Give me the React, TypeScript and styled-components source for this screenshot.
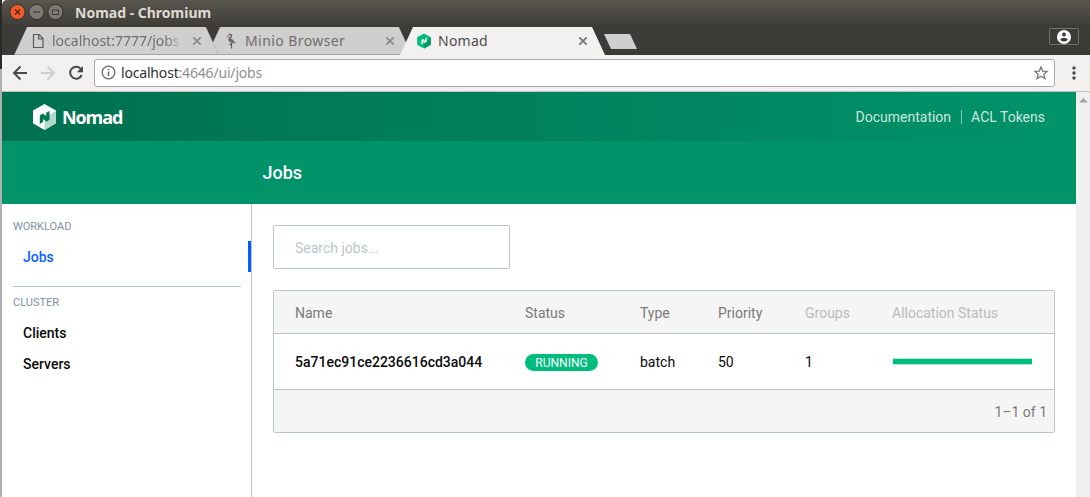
import React from "react";
import styled, { createGlobalStyle } from "styled-components";

const Global = createGlobalStyle`
  * { box-sizing: border-box; }
  body { margin: 0; background: #fff; overflow: hidden; }
`;

const uiFont = `"Noto Sans", "Open Sans", sans-serif`;
const pageFont = `Roboto, sans-serif`;

const Desktop = styled.div`
  display: flex;
  width: 1090px;
  height: 497px;
  overflow: hidden;
`;
const DesktopEdge = styled.div`
  flex: none;
  width: 2px;
  background: linear-gradient(#2b2a28 0 69px, #b0b0b0 69px);
`;
const Window = styled.div`
  flex: 1;
  min-width: 0;
  display: flex;
  flex-direction: column;
  background: #fff;
`;
const Frame = styled.div`
  height: 55px;
  flex: none;
  background: linear-gradient(#59564e 0, #3d3b37 27px, #3d3b37 100%);
  border-top-left-radius: 5px;
  font-family: ${uiFont};
`;
const TitleBar = styled.div`
  height: 27px;
  display: flex;
  align-items: center;
  padding-left: 7px;
`;
const WindowButtons = styled.svg`
  display: block;
  width: 58px;
  height: 20px;
  margin-top: -3px;
`;
const Title = styled.div`
  margin-left: 8px;
  margin-top: -1px;
  font-size: 14px;
  font-weight: 700;
  line-height: 18px;
  color: #dfdbd2;
  white-space: nowrap;
`;
const TabStrip = styled.div`
  display: flex;
  height: 28px;
  padding-left: 12px;
`;
const Tab = styled.div<{ $active?: boolean; $level: number }>`
  position: relative;
  z-index: ${(p) => p.$level};
  flex: none;
  width: 205px;
  height: 28px;
  margin-right: -12px;
  padding: 0 16px 0 16px;
  display: flex;
  align-items: center;
  color: ${(p) => (p.$active ? "#4c4c4c" : "#6e6e6e")};
  &::before, &::after {
    content: "";
    position: absolute;
    inset: 0;
    z-index: -1;
  }
  &::before {
    background: ${(p) => (p.$active ? "#f2f1f0" : "#a6a5a4")};
    clip-path: polygon(0 100%, 13px 0, 192px 0, 205px 100%);
  }
  &::after {
    background: ${(p) => (p.$active ? "#f2f1f0" : "#d0cfce")};
    clip-path: polygon(1px 27px, 13.5px 0, 191.5px 0, 204px 27px);
  }
`;
const TabIcon = styled.svg`
  flex: none;
  width: 16px;
  height: 16px;
`;
const TabLabel = styled.div<{ $faded?: boolean; $spacing?: number }>`
  flex: 1;
  min-width: 0;
  margin-left: 6px;
  overflow: hidden;
  white-space: nowrap;
  font-size: 14px;
  line-height: 20px;
  letter-spacing: ${(p) => p.$spacing ?? 0}px;
  ${(p) => p.$faded && "mask-image: linear-gradient(90deg, #000 112px, transparent 134px);"}
`;
const CloseIcon = styled.svg`
  flex: none;
  width: 10px;
  height: 10px;
  margin: 0 1px 0 4px;
`;
const NewTab = styled.div`
  width: 33px;
  height: 15px;
  margin: 7px 0 0 11px;
  background: #d0cfce;
  clip-path: polygon(0 0, 26px 0, 33px 100%, 7px 100%);
`;
const ProfileButton = styled.div`
  margin: 1px 11px 0 auto;
  width: 30px;
  height: 17px;
  border: 1px solid #74726d;
  border-radius: 2px;
  display: flex;
  justify-content: center;
  align-items: center;
  svg { width: 14px; height: 14px; }
`;
const Toolbar = styled.div`
  flex: none;
  height: 37px;
  display: flex;
  align-items: center;
  padding: 0 10px 1px 10px;
  background: #f2f1f0;
  border-bottom: 1px solid #c3c2c1;
  > svg { flex: none; display: block; }
`;
const NavIcons = styled.svg`
  width: 74px;
  height: 20px;
`;
const AddressBar = styled.div`
  width: 961px;
  height: 28px;
  margin-left: 8px;
  padding: 0 5px 0 6px;
  display: flex;
  align-items: center;
  background: #fff;
  border: 1px solid #a9a8a7;
  border-radius: 3px;
`;
const Url = styled.div`
  flex: 1;
  margin-left: 5px;
  font-family: ${uiFont};
  font-size: 14px;
  letter-spacing: -0.18px;
  line-height: 20px;
  color: #8f8f8f;
  span { color: #303030; }
`;
const MenuDots = styled.svg`
  width: 6px;
  height: 16px;
  margin-left: 15.5px;
`;
const Viewport = styled.div`
  flex: 1;
  min-height: 0;
  display: flex;
`;
const Scrollbar = styled.div`
  flex: none;
  width: 14px;
  background: #f0f0f0;
  padding: 6px 0 0 3px;
  svg { display: block; }
`;
const Page = styled.div`
  flex: 1;
  min-width: 0;
  display: flex;
  flex-direction: column;
  font-family: ${pageFont};
  font-size: 14px;
  color: #0a0a0a;
`;
const NavBar = styled.header`
  flex: none;
  height: 49px;
  display: flex;
  align-items: center;
  padding: 0 31px 0 30px;
  background: linear-gradient(90deg, #00704f, #00936a);
`;
const NavLinks = styled.nav`
  margin-left: auto;
  display: flex;
  align-items: center;
  color: rgba(255, 255, 255, 0.8);
`;
const NavLink = styled.a`
  line-height: 14px;
  & + & {
    margin-left: 10px;
    padding-left: 9px;
    border-left: 1px solid rgba(255, 255, 255, 0.5);
  }
`;
const Wordmark = styled.span`
  margin-left: 5px;
  font: 700 18px/24px "Open Sans", sans-serif;
  letter-spacing: -1.1px;
  color: #fff;
`;
const SubHeader = styled.div`
  flex: none;
  height: 63px;
  padding: 0 0 0 260.5px;
  display: flex;
  align-items: center;
  background: #00936a;
  color: #fff;
  font-size: 18px;
  font-weight: 500;
`;
const Body = styled.div`
  flex: 1;
  display: flex;
`;
const Sidebar = styled.aside`
  flex: none;
  width: 250px;
  padding-top: 15px;
  border-right: 1px solid #bac5d1;
`;
const MenuGroup = styled.section`
  & + & {
    margin: 14px 10px 0 11px;
    padding-top: 8px;
    border-top: 1px solid #bac5d1;
  }
  & + & > * { margin-left: -11px; }
`;
const MenuLabel = styled.div`
  padding-left: 11px;
  font-size: 11px;
  line-height: 15px;
  color: #7e91a8;
  margin-bottom: 7px;
`;
const MenuItem = styled.a<{ $active?: boolean }>`
  display: block;
  height: 31px;
  padding-left: 21px;
  line-height: 33px;
  font-weight: 500;
  color: ${(p) => (p.$active ? "#0a63ff" : "#0a0a0a")};
  border-right: ${(p) => (p.$active ? "3px solid #0061ff" : "none")};
`;
const Main = styled.main`
  flex: 1;
  padding: 21px 21px 0;
`;
const SearchBox = styled.input`
  display: block;
  width: 237px;
  height: 44px;
  padding: 2px 21px 0;
  border: 1px solid #bac5d1;
  border-radius: 2px;
  font: 14px ${pageFont};
  &::placeholder { color: #bac5d1; opacity: 1; }
`;
const TableCard = styled.div`
  margin-top: 21px;
  border: 1px solid #bac5d1;
  border-radius: 2px;
  background: #f5f5f5;
`;
const Row = styled.div<{ $head?: boolean }>`
  display: grid;
  grid-template-columns: 230px 115px 78px 87px 87px 141px;
  align-items: center;
  height: ${(p) => (p.$head ? "43px" : "56px")};
  padding: ${(p) => (p.$head ? "2px 0 0 21px" : "0 0 0 21px")};
  border-bottom: 1px solid #bac5d1;
  background: ${(p) => (p.$head ? "#f5f5f5" : "#fff")};
  color: ${(p) => (p.$head ? "#7a7a7a" : "#0a0a0a")};
`;
const Cell = styled.div<{ $muted?: boolean; $strong?: boolean }>`
  white-space: nowrap;
  ${(p) => p.$muted && "color: #bbb;"}
  ${(p) => p.$strong && "font-weight: 500;"}
`;
const StatusTag = styled.span`
  display: block;
  width: 73px;
  height: 17px;
  margin-top: 1px;
  border-radius: 9px;
  background: #00bc7f;
  color: #fff;
  font-size: 12px;
  line-height: 18px;
  text-align: center;
`;
const AllocationBar = styled.div`
  width: 139px;
  height: 7px;
  margin: -1px 0 0 1px;
  background: #00bc7f content-box;
  border: solid #b3ebd9;
  border-width: 1px 0;
`;
const TableFoot = styled.div`
  height: 42px;
  padding-right: 7px;
  line-height: 45px;
  text-align: right;
  color: #7a7a7a;
`;

function Close({ color }: { color: string }) {
  return (
    <CloseIcon viewBox="0 0 10 10">
      <path d="M1.3 1.3l7.4 7.4M8.7 1.3l-7.4 7.4" stroke={color} strokeWidth="1.7" />
    </CloseIcon>
  );
}

const tableHead = [
  { label: "Name" },
  { label: "Status" },
  { label: "Type" },
  { label: "Priority" },
  { label: "Groups", muted: true },
  { label: "Allocation Status", muted: true },
];

export default function App() {
  return (
    <>
      <Global />
      <Desktop>
        <DesktopEdge />
        <Window>
          <Frame>
            <TitleBar>
              <WindowButtons viewBox="0 0 58 20">
                <circle cx="8.5" cy="10" r="7.6" fill="#ee5a2c" stroke="#33312d" />
                <path d="M6 7.5l5 5M11 7.5l-5 5" stroke="#5c2413" strokeWidth="1.3" />
                <circle cx="27.5" cy="10" r="7.6" fill="#7d7a73" stroke="#33312d" />
                <path d="M24 10h7" stroke="#3c3b37" strokeWidth="1.2" />
                <circle cx="46.5" cy="10" r="7.6" fill="#7d7a73" stroke="#33312d" />
                <rect x="43.5" y="8" width="6" height="4.5" fill="none" stroke="#3c3b37" />
              </WindowButtons>
              <Title>Nomad - Chromium</Title>
            </TitleBar>
            <TabStrip>
              <Tab $level={2}>
                <TabIcon viewBox="0 0 16 16">
                  <path d="M3.5 1.5h5.6l3.9 3.9v9.1H3.5zM8.7 1.7v4.1h4.1" fill="none" stroke="#5b5b5b" strokeWidth="1.2" />
                </TabIcon>
                <TabLabel $faded>localhost:7777/jobs</TabLabel>
                <Close color="#8b8b8b" />
              </Tab>
              <Tab $level={1}>
                <TabIcon viewBox="0 0 16 16">
                  <path d="M4 4.200L6.800 1.200 8.600 2 8.200 3.800 5.800 5.800" fill="none" stroke="#555" strokeWidth="1.2" />
                  <path d="M5 6.400L7.500 5.300l2.500 1.500 2.800 3.600-3.400-.5-3.500-1.400z" fill="#6a6a6a" />
                  <path d="M8.600 9.500v6M8.600 10.500l-2 .8 2 1.400" fill="none" stroke="#555" />
                  <path d="M3.600 4.800l2.400-2.800" stroke="#e88b7d" strokeWidth="1.300" />
                </TabIcon>
                <TabLabel $spacing={0.42}>Minio Browser</TabLabel>
                <Close color="#8b8b8b" />
              </Tab>
              <Tab $level={3} $active>
                <TabIcon viewBox="0 0 16 16">
                  <path d="M8 .4l6.800 3.800v7.600L8 15.600 1.200 11.800V4.200z" fill="#00bc7f" />
                  <path d="M14.800 4.200v7.600L8 15.600V12l3-4z" fill="#009a68" />
                  <path d="M5.400 11.400V7.100l1.800-1 1.800 1.800V5.600l1.700-1v4.200L9 9.900 7.200 8.200v2.200z" fill="#fff" />
                </TabIcon>
                <TabLabel $spacing={0.25}>Nomad</TabLabel>
                <Close color="#757575" />
              </Tab>
              <NewTab />
              <ProfileButton>
                <svg viewBox="0 0 14 14">
                  <circle cx="7" cy="7" r="7" fill="#fff" />
                  <circle cx="7" cy="4.400" r="2" fill="#3d3b37" />
                  <path d="M3 9.400Q7 6 11 9.400 9.700 11.500 7 11.500T3 9.400z" fill="#3d3b37" />
                </svg>
              </ProfileButton>
            </TabStrip>
          </Frame>
          <Toolbar>
            <NavIcons viewBox="0 0 74 20" fill="none" strokeWidth="2">
              <path d="M15 10H2.500M8.500 3.500L2 10l6.500 6.500" stroke="#4a4a4a" />
              <path d="M29 10h12.500M35.500 3.500L42 10l-6.500 6.500" stroke="#cfcecd" />
              <path d="M69 6.200A6 6 0 1 0 69.700 12" stroke="#4a4a4a" />
              <path d="M71 3v6.200h-6.200z" fill="#4a4a4a" />
            </NavIcons>
            <AddressBar>
              <svg width="15" height="15" viewBox="0 0 15 15">
                <circle cx="7.500" cy="7.500" r="6.300" fill="none" stroke="#6b6b6b" strokeWidth="1.300" />
                <path d="M7.500 6.500v4.500M7.500 3.700v1.500" stroke="#6b6b6b" strokeWidth="1.500" />
              </svg>
              <Url><span>localhost</span>:4646/ui/jobs</Url>
              <svg width="16" height="16" viewBox="0 0 16 16">
                <path d="M8 1.900l1.700 4.200 4.500.3-3.400 2.900 1.100 4.400L8 11.300l-3.900 2.400 1.100-4.400-3.400-2.900 4.500-.3z" fill="none" stroke="#757575" strokeWidth="1.300" />
              </svg>
            </AddressBar>
            <MenuDots viewBox="0 0 6 16" fill="#4a4a4a">
              <circle cx="3" cy="3" r="1.700" />
              <circle cx="3" cy="8" r="1.700" />
              <circle cx="3" cy="13" r="1.700" />
            </MenuDots>
          </Toolbar>
          <Viewport>
            <Page>
              <NavBar>
                <svg width="25" height="28" viewBox="0 0 25 28">
                  <path d="M12.500 1L24 7.500v12.800L12.500 27 1 20.300V7.500z" fill="#fff" />
                  <path d="M24 8v12.300L12.500 27v-6.500l2-4 2.800-4.500z" fill="#b2d8cb" />
                  <path d="M7.800 21V12.300l3.200-1.900 3.200 2.600V9.800l3.300-1.900v8.900l-3.200 1.900-3.200-2.600v3z" fill="#007a57" />
                </svg>
                <Wordmark>Nomad</Wordmark>
                <NavLinks>
                  <NavLink>Documentation</NavLink>
                  <NavLink>ACL Tokens</NavLink>
                </NavLinks>
              </NavBar>
              <SubHeader>Jobs</SubHeader>
              <Body>
                <Sidebar>
                  <MenuGroup>
                    <MenuLabel>WORKLOAD</MenuLabel>
                    <MenuItem $active>Jobs</MenuItem>
                  </MenuGroup>
                  <MenuGroup>
                    <MenuLabel>CLUSTER</MenuLabel>
                    <MenuItem>Clients</MenuItem>
                    <MenuItem>Servers</MenuItem>
                  </MenuGroup>
                </Sidebar>
                <Main>
                  <SearchBox placeholder="Search jobs..." />
                  <TableCard>
                    <Row $head>
                      {tableHead.map((h) => (
                        <Cell key={h.label} $muted={h.muted}>{h.label}</Cell>
                      ))}
                    </Row>
                    <Row>
                      <Cell $strong>5a71ec91ce2236616cd3a044</Cell>
                      <Cell><StatusTag>RUNNING</StatusTag></Cell>
                      <Cell>batch</Cell>
                      <Cell>50</Cell>
                      <Cell>1</Cell>
                      <Cell><AllocationBar /></Cell>
                    </Row>
                    <TableFoot>1–1 of 1</TableFoot>
                  </TableCard>
                </Main>
              </Body>
            </Page>
            <Scrollbar>
              <svg width="9" height="5" viewBox="0 0 9 5"><path d="M0 4.500L4.500 0 9 4.500z" fill="#a3a3a3" /></svg>
            </Scrollbar>
          </Viewport>
        </Window>
      </Desktop>
    </>
  );
}
